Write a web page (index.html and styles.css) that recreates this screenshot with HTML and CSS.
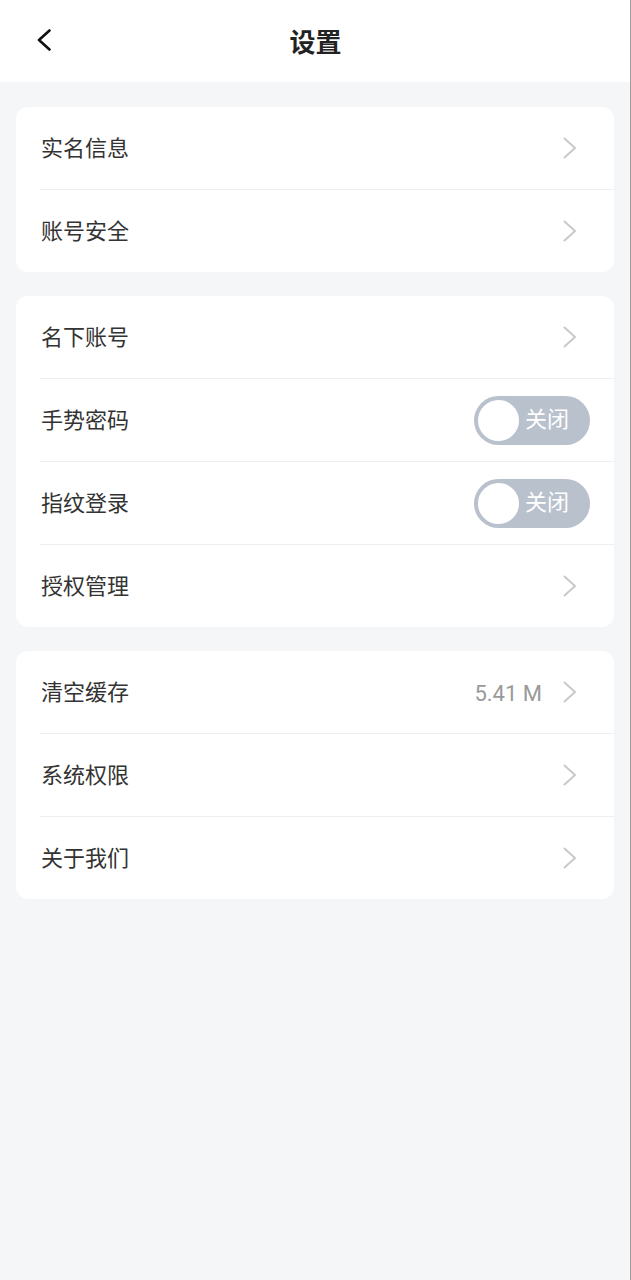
FILE: index.html
```html
<!DOCTYPE html>
<html lang="zh-CN">
<head>
<meta charset="utf-8">
<title>设置</title>
<link rel="stylesheet" href="styles.css">
</head>
<body>
<div class="page">
  <header class="nav">
    <div class="nav-left">
      <svg class="back" width="14" height="22" viewBox="0 0 14 22"><polyline points="12.5,1.5 2,11 12.5,20.5" fill="none" stroke="#111" stroke-width="2.6" stroke-linecap="round" stroke-linejoin="round"/></svg>
    </div>
    <h1 class="title">设置</h1>
    <div class="nav-right"></div>
  </header>

  <main class="content">
    <section class="card">
      <div class="row"><span class="label">实名信息</span><span class="right"><svg class="chev" width="14" height="22" viewBox="0 0 14 22"><polyline points="1.5,1.5 12,11 1.5,20.5" fill="none" stroke="#c9c9c9" stroke-width="2" stroke-linecap="round" stroke-linejoin="round"/></svg></span></div>
      <div class="row"><span class="label">账号安全</span><span class="right"><svg class="chev" width="14" height="22" viewBox="0 0 14 22"><polyline points="1.5,1.5 12,11 1.5,20.5" fill="none" stroke="#c9c9c9" stroke-width="2" stroke-linecap="round" stroke-linejoin="round"/></svg></span></div>
    </section>

    <section class="card">
      <div class="row"><span class="label">名下账号</span><span class="right"><svg class="chev" width="14" height="22" viewBox="0 0 14 22"><polyline points="1.5,1.5 12,11 1.5,20.5" fill="none" stroke="#c9c9c9" stroke-width="2" stroke-linecap="round" stroke-linejoin="round"/></svg></span></div>
      <div class="row"><span class="label">手势密码</span><span class="toggle"><span class="knob"></span><span class="toggle-text">关闭</span></span></div>
      <div class="row"><span class="label">指纹登录</span><span class="toggle"><span class="knob"></span><span class="toggle-text">关闭</span></span></div>
      <div class="row"><span class="label">授权管理</span><span class="right"><svg class="chev" width="14" height="22" viewBox="0 0 14 22"><polyline points="1.5,1.5 12,11 1.5,20.5" fill="none" stroke="#c9c9c9" stroke-width="2" stroke-linecap="round" stroke-linejoin="round"/></svg></span></div>
    </section>

    <section class="card">
      <div class="row"><span class="label">清空缓存</span><span class="right"><span class="value">5.41 M</span><svg class="chev" width="14" height="22" viewBox="0 0 14 22"><polyline points="1.5,1.5 12,11 1.5,20.5" fill="none" stroke="#c9c9c9" stroke-width="2" stroke-linecap="round" stroke-linejoin="round"/></svg></span></div>
      <div class="row"><span class="label">系统权限</span><span class="right"><svg class="chev" width="14" height="22" viewBox="0 0 14 22"><polyline points="1.5,1.5 12,11 1.5,20.5" fill="none" stroke="#c9c9c9" stroke-width="2" stroke-linecap="round" stroke-linejoin="round"/></svg></span></div>
      <div class="row"><span class="label">关于我们</span><span class="right"><svg class="chev" width="14" height="22" viewBox="0 0 14 22"><polyline points="1.5,1.5 12,11 1.5,20.5" fill="none" stroke="#c9c9c9" stroke-width="2" stroke-linecap="round" stroke-linejoin="round"/></svg></span></div>
    </section>
  </main>
</div>
</body>
</html>
```
FILE: styles.css
```css
* { box-sizing: border-box; }
html, body { margin: 0; padding: 0; }
body {
  font-family: "Roboto", "Noto Sans CJK SC", sans-serif;
  background: #f5f6f8;
  color: #333;
}
.page {
  width: 631px;
  min-height: 1280px;
  background: #f5f6f8;
  border-right: 1px solid #9e9e9e;
}
.nav {
  height: 82px;
  background: #fff;
  display: grid;
  grid-template-columns: 1fr auto 1fr;
  align-items: center;
}
.nav-left {
  display: flex;
  align-items: center;
  padding-left: 37px;
}
.back { display: block; margin-top: -2px; }
.title {
  margin: 0;
  font-family: "Noto Sans CJK SC", sans-serif;
  font-size: 26px;
  font-weight: 700;
  color: #222;
  line-height: 1;
  padding-left: 1px;
}
.content {
  padding: 25px 16px 0 16px;
  display: flex;
  flex-direction: column;
  gap: 24px;
}
.card {
  background: #fff;
  border-radius: 12px;
  overflow: hidden;
}
.row {
  height: 83px;
  margin-left: 24px;
  padding-right: 24px;
  display: flex;
  align-items: center;
  justify-content: space-between;
  border-bottom: 1px solid #eeeff1;
}
.row:last-child {
  height: 82px;
  border-bottom: none;
}
.label {
  font-size: 22px;
  color: #333;
  line-height: 1;
  padding-left: 1px;
  padding-top: 2px;
}
.right {
  display: flex;
  align-items: center;
}
.value {
  font-size: 22px;
  color: #999;
  margin-right: 21px;
  padding-top: 2px;
}
.chev {
  display: block;
  margin-right: 13px;
}
.toggle {
  width: 116px;
  height: 49px;
  border-radius: 25px;
  background: #b9c1cd;
  display: flex;
  align-items: center;
  padding: 0 0 0 2px;
}
.knob {
  width: 45px;
  height: 45px;
  border-radius: 50%;
  background: #fff;
  border: 2px solid #b9c1cd;
  flex: none;
}
.toggle-text {
  color: #fff;
  font-size: 22px;
  margin-left: 4px;
  line-height: 1;
}
```
